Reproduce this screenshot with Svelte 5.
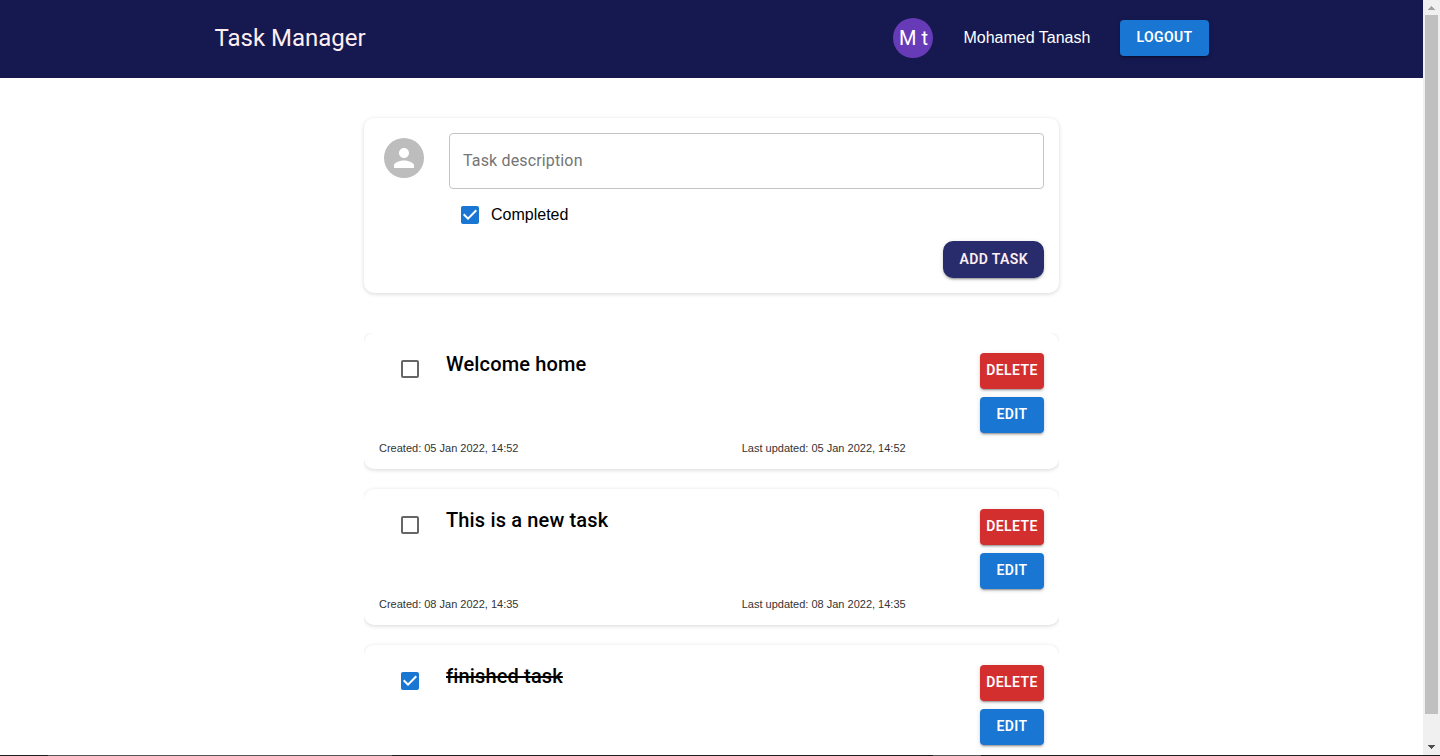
<script>
  let description = $state('');
  let completed = $state(true);
  let tasks = $state([
    { id: 1, title: 'Welcome home', done: false, created: '05 Jan 2022, 14:52', updated: '05 Jan 2022, 14:52' },
    { id: 2, title: 'This is a new task', done: false, created: '08 Jan 2022, 14:35', updated: '08 Jan 2022, 14:35' },
    { id: 3, title: 'finished task', done: true }
  ]);
</script>

{#snippet tick(on)}
  <svg class:on viewBox="0 0 24 24" aria-hidden="true">
    {#if on}
      <path d="M19 3H5c-1.11 0-2 .9-2 2v14c0 1.1.89 2 2 2h14c1.11 0 2-.9 2-2V5c0-1.1-.89-2-2-2zm-9 14l-5-5 1.41-1.41L10 14.17l7.59-7.59L19 8l-9 9z" />
    {:else}
      <path d="M19 5v14H5V5h14m0-2H5c-1.1 0-2 .9-2 2v14c0 1.1.9 2 2 2h14c1.1 0 2-.9 2-2V5c0-1.1-.9-2-2-2z" />
    {/if}
  </svg>
{/snippet}

<div class="screen">
  <div class="window">
    <div class="page">
      <header>
        <h1>Task Manager</h1>
        <div class="user">
          <span class="avatar initials">M t</span>
          <span>Mohamed Tanash</span>
          <button class="btn" type="button">Logout</button>
        </div>
      </header>

      <main>
        <form class="card new-task" onsubmit={(e) => e.preventDefault()}>
          <span class="avatar person">
            <svg viewBox="0 0 24 24" aria-hidden="true">
              <path d="M12 12c2.21 0 4-1.79 4-4s-1.79-4-4-4-4 1.79-4 4 1.79 4 4 4zm0 2c-2.67 0-8 1.34-8 4v2h16v-2c0-2.66-5.33-4-8-4z" />
            </svg>
          </span>
          <div class="fields">
            <input class="text" type="text" placeholder="Task description" aria-label="Task description" bind:value={description} />
            <label class="check-label">
              <span class="check">
                <input type="checkbox" bind:checked={completed} />
                {@render tick(completed)}
              </span>
              Completed
            </label>
            <button class="btn add" type="submit">Add task</button>
          </div>
        </form>

        <ul class="tasks">
          {#each tasks as task (task.id)}
            <li class="card task">
              <div class="body">
                <span class="check">
                  <input id="task-{task.id}" type="checkbox" bind:checked={task.done} />
                  {@render tick(task.done)}
                </span>
                <label class="title" class:done={task.done} for="task-{task.id}">{task.title}</label>
                <div class="actions">
                  <button class="btn delete" type="button">Delete</button>
                  <button class="btn" type="button">Edit</button>
                </div>
              </div>
              {#if task.created}
                <div class="meta">
                  <span>Created: {task.created}</span>
                  <span>Last updated: {task.updated}</span>
                </div>
              {/if}
            </li>
          {/each}
        </ul>
      </main>
    </div>

    <div class="scrollbar" aria-hidden="true">
      <svg class="arrow up" viewBox="0 0 7 4" shape-rendering="crispEdges"><path d="M3 0h1v1h1v1h1v1h1v1H0V3h1V2h1V1h1z" /></svg>
      <div class="track"><div class="thumb"></div></div>
      <svg class="arrow" viewBox="0 0 7 4" shape-rendering="crispEdges"><path d="M0 0h7v1H6v1H5v1H4v1H3V3H2V2H1V1H0z" /></svg>
    </div>
  </div>
  <div class="edge" aria-hidden="true"></div>
</div>

<style>
  :global(body) {
    background: #fff;
  }

  .screen {
    display: flex;
    flex-direction: column;
    height: 100vh;
    overflow: hidden;
    font: 16px 'Liberation Sans', Arial, sans-serif;
    color: #000;
  }

  .screen * {
    box-sizing: border-box;
  }

  .window {
    display: flex;
    flex: 1;
    min-height: 0;
  }

  .page {
    flex: 1;
    min-width: 0;
    overflow: hidden;
  }

  header {
    display: flex;
    align-items: center;
    justify-content: space-between;
    padding: 18px calc(15% + 1px) 20px;
    background: #151950;
    color: #fff;
  }

  h1 {
    margin: 0;
    font: 400 24px/36px Roboto, sans-serif;
    color: #ffeef0;
  }

  .user {
    display: flex;
    align-items: center;
    gap: 30px;
    line-height: 24px;
  }

  .avatar {
    display: flex;
    flex: none;
    align-items: center;
    justify-content: center;
    width: 40px;
    height: 40px;
    border-radius: 50%;
    color: #fff;
  }

  .initials {
    background: #673ab7;
    font: 20px/20px Roboto, sans-serif;
  }

  .person {
    margin: 5px;
    background: #bdbdbd;
  }

  .person svg {
    width: 30px;
    height: 30px;
    fill: #fff;
  }

  .btn {
    min-width: 64px;
    height: 36px;
    padding: 0 16px 2px;
    border: 0;
    border-radius: 4px;
    background: #1976d2;
    box-shadow: 0 3px 1px -2px rgba(0, 0, 0, 0.2), 0 2px 2px 0 rgba(0, 0, 0, 0.14), 0 1px 5px 0 rgba(0, 0, 0, 0.12);
    color: #fff;
    font: 600 14px/24px Roboto, sans-serif;
    letter-spacing: 0.02857em;
    text-transform: uppercase;
    cursor: pointer;
  }

  main {
    display: grid;
    gap: 40px;
    width: 100%;
    max-width: 695px;
    margin: 0 auto;
    padding: 40px 0;
  }

  .card {
    padding: 15px;
    border-radius: 10px;
    background: #fff;
    box-shadow: 0 1px 4px rgba(0, 0, 0, 0.16);
  }

  .new-task {
    display: flex;
    align-items: flex-start;
    gap: 20px;
  }

  .fields {
    display: flex;
    flex: 1;
    flex-direction: column;
    align-items: flex-start;
    gap: 5px;
  }

  .text {
    width: 100%;
    height: 56px;
    padding: 0 13px 2px;
    border: 1px solid #c4c4c4;
    border-radius: 4px;
    background: #fff;
    font: 16px Roboto, sans-serif;
    letter-spacing: 0.00938em;
  }

  .text::placeholder {
    color: #757575;
    opacity: 1;
  }

  .check-label {
    display: flex;
    align-items: center;
  }

  .check {
    position: relative;
    flex: none;
    width: 42px;
    height: 42px;
    padding: 9px;
  }

  .check input {
    position: absolute;
    inset: 0;
    width: 100%;
    height: 100%;
    margin: 0;
    opacity: 0;
    cursor: pointer;
  }

  .check svg {
    display: block;
    width: 24px;
    height: 24px;
    fill: #666;
  }

  .check svg.on {
    fill: #1976d2;
  }

  .add {
    align-self: flex-end;
    height: 37px;
    border-radius: 10px;
    background: #282c6c;
    color: #ffeef0;
  }

  .tasks {
    display: grid;
    gap: 20px;
    margin: 0;
    padding: 0 0 5px;
    overflow: hidden;
    list-style: none;
  }

  .task {
    min-height: 136px;
  }

  .body {
    display: flex;
    align-items: flex-start;
    gap: 15px;
    padding-left: 10px;
  }

  .title {
    flex: 1;
    font: 500 20px/32px Roboto, sans-serif;
    letter-spacing: 0.0075em;
  }

  .done {
    text-decoration: line-through;
  }

  .actions {
    display: grid;
    gap: 8px;
    padding-top: 5px;
  }

  .actions .btn {
    width: 64px;
    padding: 0 0 2px;
  }

  .btn.delete {
    background: #d32f2f;
  }

  .meta {
    display: grid;
    grid-template-columns: 6fr 5fr;
    margin-top: 9px;
    font-size: 11px;
    line-height: 12px;
    color: #333;
  }

  .scrollbar {
    display: flex;
    flex: none;
    flex-direction: column;
    align-items: center;
    width: 17px;
    padding: 6px 2px;
    background: #f0f0f0;
  }

  .arrow {
    flex: none;
    width: 7px;
    height: 4px;
    fill: #505050;
  }

  .arrow.up {
    fill: #a3a3a3;
  }

  .track {
    flex: 1;
    width: 100%;
    padding: 5px 0 31px;
  }

  .thumb {
    height: 100%;
    background: #c0c0c0;
  }

  .edge {
    flex: none;
    height: 1px;
    background: linear-gradient(90deg, #1c1c1c 48px, #555 48px, #555 392px, #1c1c1c 392px, #1c1c1c 933px, #555 933px, #555 981px, #1c1c1c 981px);
  }
</style>
